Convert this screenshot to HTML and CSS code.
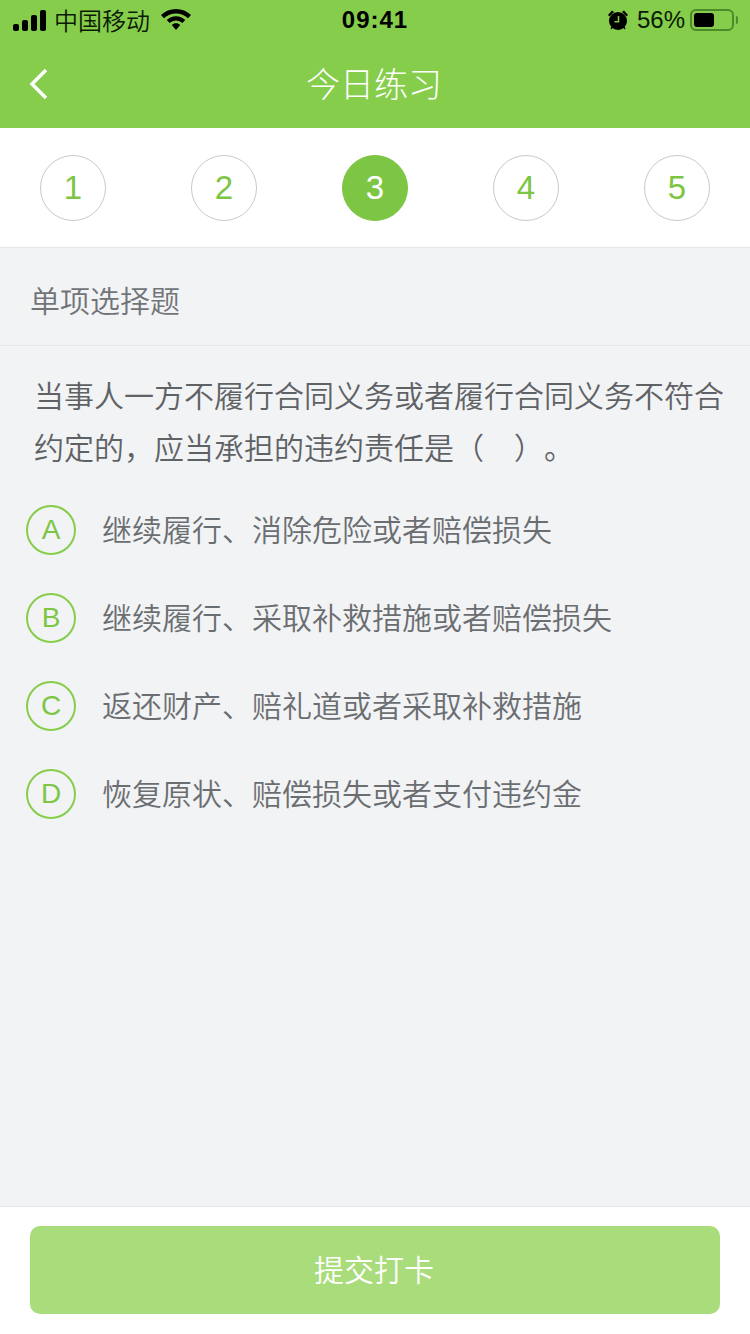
FILE: index.html
```html
<!DOCTYPE html>
<html lang="zh-CN">
<head>
    <meta charset="UTF-8">
    <meta name="viewport" content="width=device-width, initial-scale=1.0">
    <title>今日练习</title>
    <link rel="stylesheet" href="styles.css">
</head>
<body>
    <div class="page">
        <div class="header">
            <div class="status">
                <div class="status-left">
                    <svg class="signal" width="33" height="21" viewBox="0 0 33 21">
                        <rect x="0" y="14" width="6" height="7" rx="2"/>
                        <rect x="9" y="10" width="6" height="11" rx="2"/>
                        <rect x="18" y="5" width="6" height="16" rx="2"/>
                        <rect x="27" y="0" width="6" height="21" rx="2"/>
                    </svg>
                    <span class="carrier">中国移动</span>
                    <svg class="wifi" width="30" height="22" viewBox="0 0 30 22">
                        <path d="M15 0C9.200 0 4 2.200 0 6L3 9.200C6.200 6.200 10.400 4.400 15 4.400S23.800 6.200 27 9.200L30 6C26 2.200 20.800 0 15 0Z"/>
                        <path d="M15 7.200C11.400 7.200 8.200 8.600 5.700 10.900L8.700 14C10.400 12.500 12.600 11.600 15 11.600S19.600 12.500 21.300 14L24.300 10.900C21.800 8.600 18.600 7.200 15 7.200Z"/>
                        <path d="M15 14.200C13.400 14.200 11.900 14.800 10.800 15.900L15 21L19.200 15.900C18.100 14.800 16.600 14.200 15 14.200Z"/>
                    </svg>
                </div>
                <div class="time">09:41</div>
                <div class="status-right">
                    <svg class="alarm" width="22" height="22" viewBox="0 0 22 22">
                        <circle cx="11" cy="12" r="9"/>
                        <path d="M1 6L5 1.500L7 3L2.500 7.500Z"/>
                        <path d="M21 6L17 1.500L15 3L19.500 7.500Z"/>
                        <path d="M3.500 19L5.500 17L6.500 18L4.500 20.500Z"/>
                        <path d="M18.500 19L16.500 17L15.500 18L17.500 20.500Z"/>
                        <path class="alarm-hand" d="M11.500 7V12.800H7.500"/>
                    </svg>
                    <span class="percent">56%</span>
                    <div class="battery"><div class="battery-level"></div></div>
                    <div class="battery-cap"></div>
                </div>
            </div>
            <div class="nav">
                <svg class="back" width="22" height="34" viewBox="0 0 22 34">
                    <path d="M18 3L4 17L18 31"/>
                </svg>
                <div class="nav-title">今日练习</div>
            </div>
        </div>

        <div class="steps">
            <div class="step">1</div>
            <div class="step">2</div>
            <div class="step active">3</div>
            <div class="step">4</div>
            <div class="step">5</div>
        </div>

        <div class="main">
            <div class="type">单项选择题</div>
            <div class="question">当事人一方不履行合同义务或者履行合同义务不符合约定的，应当承担的违约责任是（　）。</div>
            <div class="options">
                <div class="option"><div class="letter">A</div><div class="option-text">继续履行、消除危险或者赔偿损失</div></div>
                <div class="option"><div class="letter">B</div><div class="option-text">继续履行、采取补救措施或者赔偿损失</div></div>
                <div class="option"><div class="letter">C</div><div class="option-text">返还财产、赔礼道或者采取补救措施</div></div>
                <div class="option"><div class="letter">D</div><div class="option-text">恢复原状、赔偿损失或者支付违约金</div></div>
            </div>
        </div>

        <div class="footer">
            <div class="submit">提交打卡</div>
        </div>
    </div>
</body>
</html>
```

FILE: styles.css
```css
* {
    box-sizing: border-box;
}
body {
    margin: 0;
    font-family: "Liberation Sans", "Noto Sans CJK SC", sans-serif;
    background: #f2f3f5;
}
.page {
    width: 750px;
    height: 1334px;
    display: flex;
    flex-direction: column;
    overflow: hidden;
}
.header {
    height: 128px;
    background: #86cd4b;
}
.status {
    height: 40px;
    padding: 0 13px;
    display: flex;
    align-items: center;
    justify-content: space-between;
    color: #0b1a05;
    position: relative;
}
.status-left {
    display: flex;
    align-items: center;
}
.signal {
    fill: #000;
    margin-right: 8px;
}
.carrier {
    font-size: 24px;
    width: 96px;
    font-weight: 350;
    margin-top: -2px;
}
.wifi {
    fill: #000;
    margin-left: 11px;
}
.time {
    position: absolute;
    left: 0;
    right: 0;
    text-align: center;
    font-size: 24px;
    font-weight: bold;
    letter-spacing: 1px;
    color: #000;
}
.status-right {
    display: flex;
    align-items: center;
}
.alarm {
    fill: #000;
    margin-right: 8px;
}
.alarm-hand {
    fill: none;
    stroke: #86cd4b;
    stroke-width: 1.500;
}
.percent {
    font-size: 24px;
    margin-right: 5px;
}
.battery {
    width: 44px;
    height: 22px;
    border: 2px solid #4c8a2a;
    border-radius: 6px;
    padding: 2px;
}
.battery-level {
    width: 20px;
    height: 100%;
    background: #000;
    border-radius: 3px;
}
.battery-cap {
    width: 2px;
    height: 8px;
    margin-left: 2px;
    margin-right: -1px;
    background: #4c8a2a;
    border-radius: 0 2px 2px 0;
}
.nav {
    height: 88px;
    position: relative;
    display: flex;
    align-items: center;
    justify-content: center;
    padding-right: 2px;
}
.back {
    position: absolute;
    left: 28px;
    top: 27px;
    fill: none;
    stroke: #fff;
    stroke-width: 3.500;
}
.nav-title {
    font-size: 34px;
    color: #fff;
    font-weight: 300;
    margin-top: -4px;
}
.steps {
    height: 120px;
    background: #fff;
    padding: 27px 40px 0;
    display: flex;
    justify-content: space-between;
    align-items: flex-start;
    border-bottom: 1px solid #e6e7ea;
}
.step {
    width: 66px;
    height: 66px;
    border: 1px solid #c9c9c9;
    border-radius: 50%;
    display: flex;
    align-items: center;
    justify-content: center;
    font-size: 33px;
    color: #7cc644;
}
.step.active {
    background: #7cc644;
    border-color: #7cc644;
    color: #fff;
}
.main {
    flex: 1;
}
.type {
    height: 98px;
    padding: 4px 0 0 30px;
    display: flex;
    align-items: center;
    font-size: 30px;
    font-weight: 350;
    color: #717478;
    border-bottom: 1px solid #e6e7ea;
}
.question {
    padding: 25px 20px 0 34px;
    font-size: 30px;
    font-weight: 350;
    line-height: 52px;
    color: #5f6265;
    text-spacing-trim: space-all;
}
.options {
    padding: 11px 0 0 26px;
}
.option {
    height: 88px;
    display: flex;
    align-items: center;
}
.letter {
    width: 50px;
    height: 50px;
    border: 2px solid #86cd4b;
    border-radius: 50%;
    display: flex;
    align-items: center;
    justify-content: center;
    font-size: 28px;
    color: #7cc644;
    margin-right: 26px;
}
.option-text {
    font-size: 30px;
    font-weight: 350;
    color: #6b6e71;
    margin-top: -4px;
}
.footer {
    height: 128px;
    background: #fff;
    border-top: 1px solid #e6e7ea;
    padding: 19px 30px 0;
}
.submit {
    height: 88px;
    background: #a9dc7a;
    border-radius: 10px;
    display: flex;
    align-items: center;
    justify-content: center;
    padding: 0 2px 4px 0;
    font-size: 30px;
    font-weight: 350;
    color: #fff;
}
```
